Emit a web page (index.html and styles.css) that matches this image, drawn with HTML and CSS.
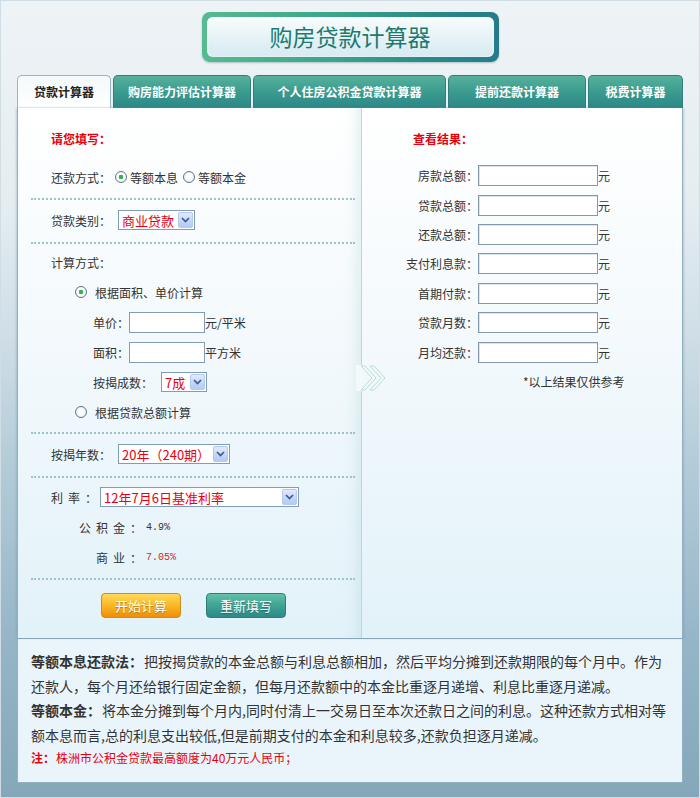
FILE: index.html
```html
<!DOCTYPE html>
<html>
  <head>
    <meta charset="UTF-8">
    <title>购房贷款计算器</title>
    <link rel="stylesheet" href="styles.css">
  </head>
  <body>
    <div class="page">

      <!-- title banner -->
      <div class="title">
        <div class="title-inner">购房贷款计算器</div>
      </div>

      <!-- calculator tabs -->
      <ul class="tabs">
        <li class="tab active">贷款计算器</li>
        <li class="tab">购房能力评估计算器</li>
        <li class="tab">个人住房公积金贷款计算器</li>
        <li class="tab">提前还款计算器</li>
        <li class="tab">税费计算器</li>
      </ul>

      <div class="panel">

        <!-- input side -->
        <div class="col col-left">
          <div class="block block-first">
            <h3 class="col-title">请您填写：</h3>
            <div class="row">
              <span class="lbl">还款方式：</span>
              <label class="opt"><input type="radio" name="way" checked>等额本息</label>
              <label class="opt"><input type="radio" name="way">等额本金</label>
            </div>
          </div>

          <div class="block block-one">
            <div class="row">
              <span class="lbl">贷款类别：</span>
              <span class="select sel-loan">
                <span class="select-val">商业贷款</span>
                <span class="select-btn"><svg width="9" height="6" viewBox="0 0 9 6"><path d="M1 1 L4.5 4.5 L8 1" fill="none" stroke="#3f5a86" stroke-width="1.7"/></svg></span>
              </span>
            </div>
          </div>

          <div class="block block-calc">
            <div class="row"><span class="lbl">计算方式：</span></div>
            <div class="row indent">
              <label class="opt"><input type="radio" name="calc" checked>根据面积、单价计算</label>
            </div>
            <div class="row indent2">
              <span class="lbl">单价：</span>
              <input class="txt" type="text">
              <span>元/平米</span>
            </div>
            <div class="row indent2">
              <span class="lbl">面积：</span>
              <input class="txt" type="text">
              <span>平方米</span>
            </div>
            <div class="row indent2">
              <span class="lbl">按揭成数：</span>
              <span class="select sel-ratio">
                <span class="select-val">7成</span>
                <span class="select-btn"><svg width="9" height="6" viewBox="0 0 9 6"><path d="M1 1 L4.5 4.5 L8 1" fill="none" stroke="#3f5a86" stroke-width="1.7"/></svg></span>
              </span>
            </div>
            <div class="row indent">
              <label class="opt"><input type="radio" name="calc">根据贷款总额计算</label>
            </div>
          </div>

          <div class="block block-one">
            <div class="row">
              <span class="lbl">按揭年数：</span>
              <span class="select sel-years">
                <span class="select-val">20年（240期）</span>
                <span class="select-btn"><svg width="9" height="6" viewBox="0 0 9 6"><path d="M1 1 L4.5 4.5 L8 1" fill="none" stroke="#3f5a86" stroke-width="1.7"/></svg></span>
              </span>
            </div>
          </div>

          <div class="block block-rate">
            <div class="row">
              <span class="lbl"><span class="spaced">利率</span>：</span>
              <span class="select sel-rate">
                <span class="select-val">12年7月6日基准利率</span>
                <span class="select-btn"><svg width="9" height="6" viewBox="0 0 9 6"><path d="M1 1 L4.5 4.5 L8 1" fill="none" stroke="#3f5a86" stroke-width="1.7"/></svg></span>
              </span>
            </div>
            <div class="row">
              <span class="rate-lbl"><span class="spaced">公积金</span>：</span>
              <span class="rate-val">4.9%</span>
            </div>
            <div class="row">
              <span class="rate-lbl"><span class="spaced">商业</span>：</span>
              <span class="rate-val red">7.05%</span>
            </div>
          </div>

          <div class="buttons">
            <button class="btn btn-go" type="button">开始计算</button>
            <button class="btn btn-reset" type="button">重新填写</button>
          </div>
        </div>

        <!-- result side -->
        <div class="col col-right">
          <h3 class="col-title">查看结果：</h3>
          <div class="result-row"><span class="res-lbl">房款总额：</span><input class="res-txt" type="text"><span>元</span></div>
          <div class="result-row"><span class="res-lbl">贷款总额：</span><input class="res-txt" type="text"><span>元</span></div>
          <div class="result-row"><span class="res-lbl">还款总额：</span><input class="res-txt" type="text"><span>元</span></div>
          <div class="result-row"><span class="res-lbl">支付利息款：</span><input class="res-txt" type="text"><span>元</span></div>
          <div class="result-row"><span class="res-lbl">首期付款：</span><input class="res-txt" type="text"><span>元</span></div>
          <div class="result-row"><span class="res-lbl">贷款月数：</span><input class="res-txt" type="text"><span>元</span></div>
          <div class="result-row"><span class="res-lbl">月均还款：</span><input class="res-txt" type="text"><span>元</span></div>
          <div class="result-note">*以上结果仅供参考</div>
        </div>

        <!-- arrow between the two columns -->
        <span class="arrow">
          <svg width="32" height="27" viewBox="0 0 32 27">
            <rect x="0" y="0" width="7" height="26" fill="#f4fafb"/>
            <polygon points="5,1 9,1 20,13 9,25 5,25 16,13" fill="#f3fafa" stroke="#b7dcda" stroke-width="1"/>
            <polygon points="14,1 18,1 29,13 18,25 14,25 25,13" fill="#f3fafa" stroke="#b7dcda" stroke-width="1"/>
          </svg>
        </span>
      </div>

      <!-- explanation -->
      <div class="notes">
        <p><b>等额本息还款法：</b>把按揭贷款的本金总额与利息总额相加，然后平均分摊到还款期限的每个月中。作为还款人，每个月还给银行固定金额，但每月还款额中的本金比重逐月递增、利息比重逐月递减。</p>
        <p><b>等额本金：</b>将本金分摊到每个月内,同时付清上一交易日至本次还款日之间的利息。这种还款方式相对等额本息而言,总的利息支出较低,但是前期支付的本金和利息较多,还款负担逐月递减。</p>
        <p class="warn"><b>注：</b>株洲市公积金贷款最高额度为40万元人民币；</p>
      </div>

    </div>
  </body>
</html>
```

FILE: styles.css
```css
body {
  margin: 0;
  font-family: "Noto Sans CJK SC", "Liberation Sans", sans-serif;
  font-size: 12px;
  color: #333;
}

.page {
  width: 700px;
  height: 798px;
  box-sizing: border-box;
  padding: 11px 16px 0;
  border: 1px solid #d0dde5;
  background: linear-gradient(to bottom, #eef3f6 0%, #e5edf1 25%, #cfdee7 42%, #b4ccd8 58%, #96b6c8 80%, #84a7ba 100%);
}

/* title */

.title {
  width: 297px;
  height: 50px;
  margin: 0 auto;
  box-sizing: border-box;
  padding: 5px;
  border-radius: 8px;
  background: linear-gradient(to right, #56bb90, #3ba48a 45%, #2a8b86 75%, #247c8a);
  box-shadow: 0 1px 2px rgba(60, 110, 120, .35);
}

.title-inner {
  height: 40px;
  line-height: 38px;
  border-radius: 6px;
  text-align: center;
  font-size: 23px;
  color: #1b7b70;
  background: linear-gradient(to bottom, #f8fcfd, #e6f3f6 50%, #d6eaf0);
  box-shadow: inset 0 0 3px rgba(255, 255, 255, .9);
}

/* tabs */

.tabs {
  display: grid;
  grid-template-columns: 94px 138px 193px 138px 95px;
  gap: 2px;
  margin: 13px 0 0;
  padding: 0;
  list-style: none;
}

.tab {
  height: 33px;
  line-height: 32px;
  box-sizing: border-box;
  text-align: center;
  font-weight: bold;
  color: #fff;
  border: 1px solid #2f7f7a;
  border-bottom: none;
  border-radius: 5px 5px 0 0;
  background: linear-gradient(to bottom, #56b19c, #3b9b8f 50%, #2b8786);
}

.tab.active {
  color: #222;
  border-color: #9ab5c4;
  background: linear-gradient(to bottom, #f4f9fb, #fff);
}

/* main panel */

.panel {
  position: relative;
  display: grid;
  grid-template-columns: 344px 320px;
  height: 530px;
  border-left: 1px solid #93b0c0;
  border-right: 1px solid #93b0c0;
  box-shadow: -1px 0 2px rgba(110, 150, 170, .35), 1px 0 2px rgba(110, 150, 170, .35);
}

.col {
  background: linear-gradient(to bottom, #ffffff, #f3f9fc 45%, #e2f2f9);
}

.col-left {
  border-right: 1px solid #bcd6da;
  box-shadow: inset -14px 0 14px -10px rgba(170, 210, 215, .35);
}

.col-title {
  margin: 0;
  height: 22px;
  line-height: 22px;
  font-size: 12px;
  color: #e8000f;
}

.block {
  margin: 0 6px 0 13px;
  padding-left: 20px;
  border-bottom: 2px dotted #9cc6c2;
}

.block-first {
  padding-top: 20px;
  padding-bottom: 6px;
}

.block-first .row {
  margin-top: 12px;
}

.block-one {
  padding: 5px 0 7px 20px;
}

.block-calc {
  padding: 3px 0 5px 20px;
}

.block-rate {
  padding: 4px 0 6px 20px;
}

.row {
  display: flex;
  align-items: center;
  height: 30px;
}

.indent {
  padding-left: 24px;
}

.indent2 {
  padding-left: 42px;
}

.lbl {
  margin-right: 4px;
}

.indent2 .lbl {
  margin-right: 0;
}

.spaced {
  letter-spacing: 5px;
}

.opt {
  display: flex;
  align-items: center;
  margin-right: 5px;
}

.opt input {
  appearance: none;
  width: 12px;
  height: 12px;
  margin: 0 3px 0 0;
  border: 1px solid #5d7690;
  border-radius: 50%;
  background: radial-gradient(circle, #fff 30%, #dfe6ee);
}

.opt input:checked {
  background: radial-gradient(circle, #37b24d 0, #37b24d 2px, #fff 2.6px, #fff 3.5px, #dfe6ee);
}

.indent .opt input {
  margin-right: 8px;
}

.txt {
  width: 76px;
  height: 21px;
  box-sizing: border-box;
  margin: 0;
  border: 1px solid #7f9db9;
}

.select {
  display: flex;
  align-items: center;
  justify-content: space-between;
  height: 20px;
  box-sizing: border-box;
  border: 1px solid #7f9db9;
  background: #fff;
  margin-left: 3px;
}

.select-val {
  padding-left: 3px;
  font-size: 13px;
  color: #e8000f;
  white-space: nowrap;
}

.select-btn {
  display: flex;
  align-items: center;
  justify-content: center;
  width: 15px;
  height: 16px;
  margin-right: 1px;
  box-sizing: border-box;
  border: 1px solid #b4c8f0;
  border-radius: 2px;
  background: linear-gradient(to bottom, #e1eafd, #c3d5f7 60%, #b4cbf4);
}

.sel-loan {
  width: 77px;
}

.sel-ratio {
  width: 46px;
  margin-left: 8px;
}

.sel-years {
  width: 112px;
}

.sel-rate {
  width: 199px;
  margin-left: -1px;
}

.rate-lbl {
  width: 91px;
  text-align: right;
}

.rate-val {
  margin-left: 4px;
  font-family: "Liberation Mono", monospace;
  font-size: 10px;
  color: #333;
}

.rate-val.red {
  color: #c8283a;
}

.buttons {
  display: flex;
  gap: 25px;
  padding: 13px 0 0 83px;
}

.btn {
  width: 80px;
  height: 25px;
  border-radius: 4px;
  font-family: inherit;
  font-size: 13px;
  color: #fff;
  text-shadow: 0 1px 1px rgba(0, 0, 0, .3);
  cursor: pointer;
}

.btn-go {
  border: 1px solid #d38b17;
  background: linear-gradient(to bottom, #ffd95a, #fbbb2a 45%, #ef8e06);
}

.btn-reset {
  border: 1px solid #2f7d7b;
  background: linear-gradient(to bottom, #63c2a8, #43a596 45%, #2c8a8a);
}

/* results */

.col-right {
  padding-top: 20px;
}

.col-right .col-title {
  margin: 0 0 11px 51px;
}

.result-row {
  display: flex;
  align-items: center;
  height: 29.4px;
}

.res-lbl {
  width: 116px;
  text-align: right;
}

.res-txt {
  width: 120px;
  height: 21px;
  box-sizing: border-box;
  margin: 0;
  border: 1px solid #8198ad;
  box-shadow: inset 1px 1px 0 #dde5ec;
}

.result-note {
  height: 30px;
  line-height: 30px;
  padding-left: 161px;
}

.arrow {
  position: absolute;
  left: 338px;
  top: 257px;
  line-height: 0;
}

/* notes */

.notes {
  height: 145px;
  box-sizing: border-box;
  padding: 10px 14px 0 13px;
  border: 1px solid #93b0c0;
  border-top: 1px solid #8fadbe;
  background: #eaf5fb;
  font-size: 14px;
  line-height: 24.5px;
  color: #333;
}

.notes p {
  margin: 0;
}

.notes b {
  margin-right: 1px;
}

.notes .warn {
  font-size: 12px;
  line-height: 22px;
  color: #e8000f;
}
```
